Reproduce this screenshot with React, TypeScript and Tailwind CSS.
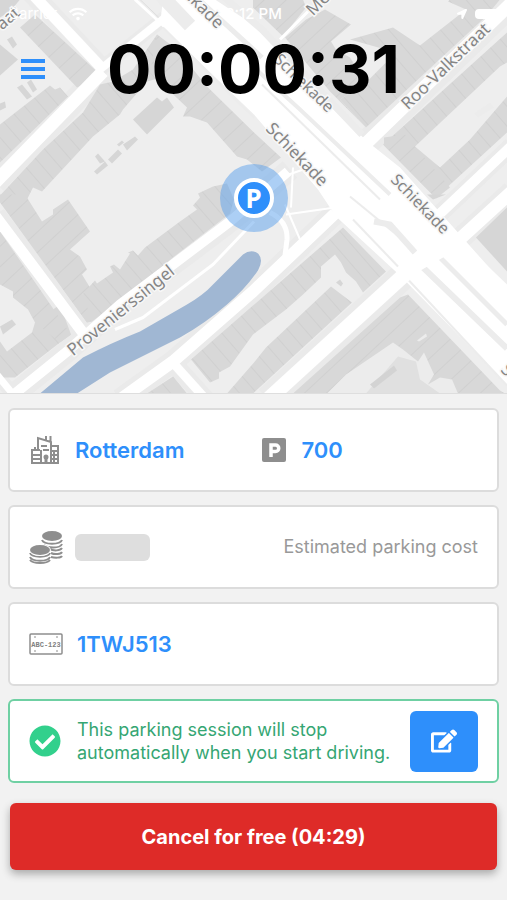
import React from 'react';
import { FaCheckCircle, FaWifi, FaLocationArrow, FaEdit } from 'react-icons/fa';

// House rows: "ne" rows run up to the right, "se" rows run down to the right
const neBuildings = [
  '0,125 50,86 55,90 60,88 68,97 0,163',
  '0,196 43,150 83,113 100,85 113,82 133,70 157,35 183,57 180,73 147,82 123,110 120,115 93,137 42,192 33,188 27,200 0,200',
  '198,194 213,187 227,184 234,200 230,214 173,258 133,292 92,322 87,323 62,288 82,295 95,281 97,284 113,273 110,267 114,265 120,270 130,254 128,253 133,251 138,256 145,248 180,222 197,210 193,206 200,198',
  '0,378 0,342 7,352 32,333 35,323 60,305 71,335 60,343 15,378',
  '343,228 386,272 363,293 356,282 346,273 341,263 335,255 321,267 321,278 303,295 286,310 253,335 230,367 219,373 219,379 210,383 191,360 253,306',
  '331,287 352,303 253,394 227,394 254,363 266,348',
  '147,394 173,377 187,394',
  '350,40 393,28 420,46 466,10 448,2 450,0 500,0 486,17 366,128 340,100 366,83 396,53',
  '383,145 507,33 507,63 500,67 415,147 440,168 470,140 507,97 507,133 436,198',
];

const seBuildings = [
  '20,28 35,15 98,73 94,80 77,88',
  '157,35 177,50 207,87 254,133 281,158 262,172 247,160 237,157 207,123 190,117 183,117 187,108 150,73',
  '0,195 25,195 42,222 53,215 53,210 68,200 90,232 70,250 80,257 87,270 82,275 90,288 82,295 92,320 87,323 0,203',
  '0,232 71,335 60,343 35,323 28,310 13,298 13,292 0,285',
  '253,0 303,0 306,8 283,37 253,8',
  '285,38 306,20 325,10 351,25 331,42 336,50 350,58 366,83 340,100 366,128 330,92',
  '408,295 500,391 505,394 293,394 400,298',
  '384,138 384,146 436,199 450,188 415,147 405,135',
];

const plainBuildings = [
  '0,45 18,60 0,76',
  '7,40 12,37 17,45 13,49',
  '17,88 22,85 32,97 27,100',
  '27,83 31,80 37,90 33,93',
  '0,104 5,102 6,108 0,111',
  '133,120 157,98 162,102 167,98 174,108 147,135',
  '123,145 135,137 138,140 127,151',
  '108,160 118,150 122,154 112,164',
  '94,172 105,162 108,166 97,175',
  '95,157 98,154 105,162 100,164',
  '117,145 122,141 124,143 119,147',
  '0,327 12,320 16,325 3,335',
  '476,238 507,208 507,272',
  '427,195 433,200 446,195',
  '336,283 340,280 343,284 341,287',
  '0,0 20,0 10,12 0,18',
];

const courtyards = [
  '327,394 346,375 393,343 403,350 418,362 424,353 434,375 428,385 440,378 452,380 458,394',
  '474,114 490,103 494,108 478,118',
  '417,341 426,334 427,337 419,342',
];

const kerbRoads = [
  { d: 'M30 -8 L103 70', w: 20 },
  { d: 'M103 72 L-5 183', w: 24 },
  { d: 'M100 70 L165 18', w: 14 },
  { d: 'M366 144 L515 0', w: 26 },
  { d: 'M438 216 L512 146', w: 18 },
  { d: 'M406 272 L456 243 L512 192', w: 22 },
  { d: 'M408 272 L268 400', w: 27 },
  { d: 'M335 214 L253 292 L173 362 L120 400', w: 22 },
  { d: 'M170 360 L206 400', w: 18 },
  { d: 'M290 170 L230 222 L173 265 L120 305 L67 352 L10 398', w: 22 },
  { d: 'M-5 216 L88 340', w: 22 },
  { d: 'M-4 374 L14 396', w: 14 },
];

const roads = [
  { d: 'M30 -8 L103 70', w: 11 },
  { d: 'M103 72 L-5 183', w: 13 },
  { d: 'M100 70 L165 18', w: 8 },
  { d: 'M366 144 L515 0', w: 13 },
  { d: 'M280 40 L308 12', w: 3 },
  { d: 'M438 216 L512 146', w: 10 },
  { d: 'M406 272 L456 243 L512 192', w: 13 },
  { d: 'M408 272 L268 400', w: 15 },
  { d: 'M335 214 L253 292 L173 362 L120 400', w: 12 },
  { d: 'M170 360 L206 400', w: 9 },
  { d: 'M288 172 L230 222 L173 265 L120 305 L67 352 L10 398', w: 10 },
  { d: 'M-5 216 L88 340', w: 11 },
  { d: 'M-4 374 L14 396', w: 7 },
  { d: 'M254 222 L213 265 L143 318 L115 330', w: 3 },
  { d: 'M270 213 Q288 222 287 240 L284 264', w: 5 },
  { d: 'M286 215 L335 208', w: 2 },
  { d: 'M285 205 L300 240', w: 2 },
  { d: 'M293 168 L291 208', w: 2 },
  { d: 'M280 178 L315 166', w: 2 },
  { d: 'M458 240 L512 292', w: 3 },
];

const streetLabels = [
  { text: 'Schiekade', x: 160, y: -27, rotate: 45, size: 17 },
  { text: 'Schiekade', x: 273, y: 61, rotate: 44, size: 16 },
  { text: 'Schiekade', x: 265, y: 130, rotate: 46, size: 17 },
  { text: 'Schiekade', x: 390, y: 181, rotate: 46, size: 16 },
  { text: 'Schiekade', x: 500, y: 371, rotate: 46, size: 17 },
  { text: 'Me', x: 313, y: 17, rotate: -45, size: 17 },
  { text: 'Roo-Valkstraat', x: 408, y: 111, rotate: -44, size: 17 },
  { text: 'Provenierssingel', x: 73, y: 357, rotate: -39, size: 17 },
  { text: 'aat', x: 2, y: 31, rotate: -40, size: 17 },
];

const CityMap: React.FC = () => (
  <svg
    className="absolute inset-0 h-full w-full"
    viewBox="0 0 507 394"
    preserveAspectRatio="xMidYMid slice"
    aria-hidden="true"
  >
    <defs>
      <pattern id="houses-ne" width="13" height="60" patternUnits="userSpaceOnUse" patternTransform="rotate(-41)">
        <rect width="13" height="60" fill="#d8d8d8" />
        <path d="M0.5 0V60" stroke="#cecece" strokeWidth="0.8" />
      </pattern>
      <pattern id="houses-se" width="15" height="60" patternUnits="userSpaceOnUse" patternTransform="rotate(47)">
        <rect width="15" height="60" fill="#d8d8d8" />
        <path d="M0.5 0V60" stroke="#cecece" strokeWidth="0.8" />
      </pattern>
    </defs>

    <rect width="507" height="394" fill="#eeeeee" />

    {kerbRoads.map((road) => (
      <path key={road.d} d={road.d} fill="none" stroke="#eaeaea" strokeWidth={road.w} />
    ))}
    {neBuildings.map((points) => (
      <polygon key={points} points={points} fill="url(#houses-ne)" />
    ))}
    {seBuildings.map((points) => (
      <polygon key={points} points={points} fill="url(#houses-se)" />
    ))}
    {plainBuildings.map((points) => (
      <polygon key={points} points={points} fill="#d6d6d6" />
    ))}
    {courtyards.map((points) => (
      <polygon key={points} points={points} fill="#ececec" />
    ))}
    <polygon points="366,394 398,357 416,362 420,380 440,394" fill="#e0e0e0" />
    <polygon points="370,385 394,366 397,371 374,389" fill="#d3d3d3" />

    {/* Canal */}
    <path
      d="M40 394 L83 358 Q112 343 140 332 L187 305 Q204 295 213 285 L243 255 Q251 249 258 254 Q264 260 258 271 Q245 290 227 305 Q205 324 180 338 L110 373 L77 394 Z"
      fill="#a0b7d3"
    />

    {/* Schiekade */}
    <path
      d="M163 0 L215 0 L253 25 L366 141 L400 168 L507 288 L507 385 L400 276 L336 217 L318 190 L254 115 L160 25 Z"
      fill="#ffffff"
    />
    <g fill="none" stroke="#ececec">
      <path d="M135 0 L160 23" stroke="#ffffff" strokeWidth="3" />
      <path d="M140 0 L163 22" stroke="#dddddd" strokeWidth="1" />
      <path d="M163 28 L254 118" strokeWidth="2" />
      <path d="M150 -16 L190 26" strokeWidth="14" />
      <path d="M190 -8 L262 58" strokeWidth="5" />
      <path d="M222 -4 L262 30 L362 135" strokeWidth="7" />
      <path d="M253 67 L300 110 L390 195" strokeWidth="4" />
      <path d="M262 85 L380 200" strokeWidth="2" />
      <path d="M374 222 L390 225 L415 253" strokeWidth="6" />
      <path d="M350 197 L400 238" strokeWidth="2" />
      <path d="M422 267 L507 349" strokeWidth="6" />
      <path d="M439 257 L507 325" strokeWidth="5" />
      <path d="M353 220 L398 267" strokeWidth="2" />
      <path d="M409 281 L507 386" strokeWidth="2" />
    </g>

    {roads.map((road) => (
      <path key={road.d} d={road.d} fill="none" stroke="#ffffff" strokeWidth={road.w} strokeLinejoin="round" />
    ))}

    {streetLabels.map((label) => (
      <text
        key={`${label.text}-${label.x}`}
        transform={`translate(${label.x} ${label.y}) rotate(${label.rotate})`}
        fill="#858585"
        stroke="#f7f7f7"
        strokeWidth="3"
        paintOrder="stroke"
        fontFamily="'Noto Sans', sans-serif"
        fontSize={label.size}
      >
        {label.text}
      </text>
    ))}
  </svg>
);

const BuildingIcon: React.FC = () => (
  <svg className="h-7 w-7" viewBox="0 0 28 28" fill="none" stroke="#8e8e8e" strokeWidth="2" aria-hidden="true">
    <path d="M0 27H28M1 27V14H9M4 14V11M1 19H10M1 23H10" />
    <path d="M7 14V2L20 6V27M10 14V27M15 4V0M19.500 6V0" />
    <path d="M20 10H27V27M20 15H27M20 19H27M20 23H27M23 15V27" />
    <path d="M10 10H16M12 14H18" />
    <path d="M15 27V21" strokeWidth="3" />
    <circle cx="15" cy="21" r="1.500" fill="#8e8e8e" />
  </svg>
);

const CoinsIcon: React.FC = () => (
  <svg className="h-[34px] w-[34px]" viewBox="0 0 34 34" aria-hidden="true">
    <g fill="none" stroke="#8e8e8e" strokeWidth="2">
      <path d="M13 10C15 15 31 15 33 10M15 15C18 18 31 19 33 14M20 19C25 21 31 21 33 18M22 23C26 25 32 24 33 22M22 27C26 28 32 28 33 26" />
      <path d="M1 23C3 28 19 28 21 23M1 27C3 32 19 32 21 27M1 30C4 34 18 34 21 30" />
    </g>
    <ellipse cx="23" cy="6" rx="10" ry="5" fill="#8e8e8e" />
    <ellipse cx="11" cy="20" rx="11" ry="6" fill="#ffffff" />
    <ellipse cx="11" cy="20" rx="10" ry="5" fill="#8e8e8e" />
  </svg>
);

const PlateIcon: React.FC = () => (
  <svg className="h-[22px] w-[34px]" viewBox="0 0 34 22" aria-hidden="true">
    <rect x="1" y="1" width="32" height="20" rx="1" fill="#ffffff" stroke="#8e8e8e" strokeWidth="1.5" />
    <path d="M5 4H7M27 4H29M5 18H7M27 18H29" stroke="#8e8e8e" strokeWidth="1" />
    <text
      x="17"
      y="14"
      textAnchor="middle"
      fontFamily="'Liberation Mono', monospace"
      fontSize="7"
      fontWeight="700"
      fill="#808080"
    >
      ABC-123
    </text>
  </svg>
);

const ParkingIcon: React.FC = () => (
  <svg className="h-6 w-6" viewBox="0 0 24 24" aria-hidden="true">
    <rect width="24" height="24" rx="2" fill="#8e8e8e" />
    <path d="M9 19V7H13.5A3.2 3.2 0 0 1 13.5 13.5H9" fill="none" stroke="#ffffff" strokeWidth="3.5" />
  </svg>
);

interface CardProps {
  children: React.ReactNode;
  className?: string;
}

const Card: React.FC<CardProps> = ({ children, className = 'border-[#dcdcdc]' }) => (
  <div className={`flex h-[84px] items-center rounded-md border-2 bg-white px-[19px] ${className}`}>{children}</div>
);

const App: React.FC = () => {
  return (
    <div className="min-h-screen bg-[#f2f2f2] font-['Inter',sans-serif]">
      {/* Map with status bar and timer */}
      <header className="relative h-[394px] overflow-hidden border-b border-[#dedede]">
        <CityMap />

        <div className="relative grid h-7 grid-cols-3 items-center px-2 text-[15px] text-white">
          <div className="flex items-center gap-3">
            <span>Carrier</span>
            <FaWifi className="text-lg" />
          </div>
          <span className="text-center font-medium">3:12 PM</span>
          <div className="flex items-center justify-end gap-2">
            <FaLocationArrow className="text-[10px]" />
            <span className="h-[10px] w-6 rounded-sm bg-white" />
          </div>
        </div>

        <button
          type="button"
          aria-label="Menu"
          className="absolute left-[21px] top-[58px] flex h-[22px] w-6 flex-col justify-between py-px"
        >
          <span className="h-1 w-full bg-[#2e8ffb]" />
          <span className="h-1 w-full bg-[#2e8ffb]" />
          <span className="h-1 w-full bg-[#2e8ffb]" />
        </button>

        <h1 className="relative mt-[7px] text-center text-[66px] font-bold leading-[68px] text-black">00:00:31</h1>

        {/* Current parking position */}
        <div className="absolute left-1/2 top-[164px] flex h-[68px] w-[68px] -translate-x-1/2 items-center justify-center rounded-full bg-[#5a9fec]/50">
          <div className="flex h-10 w-10 items-center justify-center rounded-full border-4 border-white bg-[#2e8ffb] font-['Noto_Sans',sans-serif] text-[26px] font-bold leading-none text-white">
            P
          </div>
        </div>
      </header>

      <main className="flex flex-col gap-[13px] px-2 pt-[14px] pb-7">
        <Card>
          <div className="flex flex-1 items-center text-[22px] font-semibold text-[#2e8ffb]">
            <div className="flex w-[46px] pl-[2px]">
              <BuildingIcon />
            </div>
            Rotterdam
          </div>
          <div className="flex flex-1 items-center gap-4 pl-4 text-[22px] font-semibold text-[#2e8ffb]">
            <ParkingIcon />
            700
          </div>
        </Card>

        <Card>
          <div className="flex w-[46px]">
            <CoinsIcon />
          </div>
          <div className="h-[27px] w-[75px] rounded-md bg-[#dedede]" />
          <span className="ml-auto text-lg text-[#999999]">Estimated parking cost</span>
        </Card>

        <Card>
          <div className="flex w-12">
            <PlateIcon />
          </div>
          <span className="text-[22px] font-semibold text-[#2e8ffb]">1TWJ513</span>
        </Card>

        <Card className="border-[#6fd0a3]">
          <div className="flex w-12 shrink-0">
            <FaCheckCircle className="text-[32px] text-[#32d08c]" />
          </div>
          <p className="flex-1 text-lg leading-[23px] text-[#35a673]">
            This parking session will stop automatically when you start driving.
          </p>
          <button
            type="button"
            aria-label="Edit"
            className="flex h-[61px] w-[68px] shrink-0 items-center justify-center rounded-md bg-[#2e8ffb] text-[26px] text-white"
          >
            <FaEdit />
          </button>
        </Card>

        <button
          type="button"
          className="mx-[2px] mt-[7px] h-[67px] rounded-md bg-[#de2b28] text-xl font-bold text-white shadow-[0_4px_8px_rgba(0,0,0,0.3)]"
        >
          Cancel for free (04:29)
        </button>
      </main>
    </div>
  );
};

export default App;
